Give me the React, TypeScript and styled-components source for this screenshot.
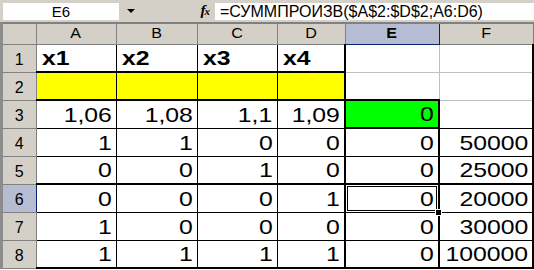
import React from "react";
import styled, { createGlobalStyle } from "styled-components";

const GlobalStyle = createGlobalStyle`
  html, body {
    margin: 0;
    padding: 0;
    background: #fff;
  }
  body {
    font-family: "Liberation Sans", Arial, sans-serif;
    overflow: hidden;
  }
`;

const GRID = "1px solid #c0c0c0";
const BLACK1 = "1px solid #000";
const BLACK2 = "2px solid #000";
const HDR = "1px solid #808080";
const SEL = "1px solid #0a246a";

const Window = styled.div`
  width: 534px;
  height: 270px;
  overflow: hidden;
  background: #fff;
`;

const FormulaBar = styled.div`
  display: flex;
  align-items: center;
  height: 22px;
  background: #d4d0c8;
`;

const NameBox = styled.div`
  width: 116px;
  height: 17px;
  margin-left: 3px;
  background: #fff;
  color: #000;
  font-size: 15px;
  line-height: 17px;
  text-align: center;
`;

const DropButton = styled.div`
  width: 24px;
  height: 17px;
  display: flex;
  align-items: center;
  justify-content: center;

  &::after {
    content: "";
    border-left: 4px solid transparent;
    border-right: 4px solid transparent;
    border-top: 4px solid #000;
  }
`;

const FxMark = styled.div`
  width: 72px;
  padding-right: 5px;
  box-sizing: border-box;
  text-align: right;
  font-family: "Liberation Serif", serif;
  font-style: italic;
  font-weight: bold;
  font-size: 15px;
  line-height: 17px;
  color: #000;
`;

const FxSub = styled.span`
  font-size: 11px;
  margin-left: -1px;
`;

const FormulaInput = styled.div`
  flex: 1;
  height: 17px;
  background: #fff;
  padding-left: 5px;
  color: #000;
  font-size: 16px;
  line-height: 17px;
  white-space: nowrap;
  overflow: hidden;
`;

const Sheet = styled.div`
  border-top: 2px solid #808080;
  border-left: 3px solid #8c8c8c;
  overflow: hidden;
`;

const Grid = styled.table`
  border-collapse: collapse;
  table-layout: fixed;
  width: 530px;
`;

const HeaderRow = styled.tr`
  height: 20px;
`;

const BodyRow = styled.tr`
  height: 28px;
`;

const Corner = styled.th`
  background: #d4d0c8;
  border-right: ${HDR};
  border-bottom: ${HDR};
  padding: 0;
`;

const ColHeader = styled.th<{ $active: boolean }>`
  background: ${(p) => (p.$active ? "#b6bdd2" : "#d4d0c8")};
  border-right: ${(p) => (p.$active ? SEL : HDR)};
  border-bottom: ${(p) => (p.$active ? SEL : HDR)};
  padding: 0;
  font-size: 14px;
  font-weight: ${(p) => (p.$active ? "bold" : "normal")};
  line-height: 19px;
  color: #000;
  text-align: center;
  vertical-align: middle;
`;

const HeaderText = styled.span`
  display: inline-block;
  transform: scaleX(1.15);
`;

const RowHeader = styled.th<{ $active: boolean }>`
  background: ${(p) => (p.$active ? "#b6bdd2" : "#d4d0c8")};
  border-top: ${(p) => (p.$active ? SEL : HDR)};
  border-bottom: ${HDR};
  border-right: ${(p) => (p.$active ? SEL : HDR)};
  padding: 0 0 3px;
  font-size: 16px;
  font-weight: normal;
  line-height: 18px;
  color: #000;
  text-align: center;
  vertical-align: bottom;
`;

const Cell = styled.td<{
  $top: string;
  $right: string;
  $bottom: string;
  $left: string;
  $fill: string;
  $bold: boolean;
  $align: "left" | "right";
  $active: boolean;
}>`
  position: relative;
  background: ${(p) => p.$fill};
  border-top: ${(p) => p.$top};
  border-right: ${(p) => p.$right};
  border-bottom: ${(p) => p.$bottom};
  border-left: ${(p) => p.$left};
  padding: 0 4px 3px 5px;
  font-size: 21px;
  font-weight: ${(p) => (p.$bold ? "bold" : "normal")};
  line-height: 21px;
  color: #000;
  text-align: ${(p) => p.$align};
  vertical-align: bottom;
  white-space: nowrap;
  box-shadow: ${(p) =>
    p.$active ? "inset 0 0 0 1px #fff, inset 0 0 0 2px #000" : "none"};
`;

const CellText = styled.span<{ $align: "left" | "right" }>`
  display: inline-block;
  transform: scaleX(1.18);
  transform-origin: ${(p) => p.$align} bottom;
`;

const FillHandle = styled.span`
  position: absolute;
  right: -4px;
  bottom: -4px;
  width: 5px;
  height: 5px;
  background: #000;
  border: 1px solid #fff;
  z-index: 2;
`;

const COLS = ["A", "B", "C", "D", "E", "F"];
const WIDTHS = [33, 80, 81, 80, 68, 94, 94];

const DATA = [
  ["x1", "x2", "x3", "x4", "", ""],
  ["", "", "", "", "", ""],
  ["1,06", "1,08", "1,1", "1,09", "0", ""],
  ["1", "1", "0", "0", "0", "50000"],
  ["0", "0", "1", "0", "0", "25000"],
  ["0", "0", "0", "1", "0", "20000"],
  ["1", "0", "0", "0", "0", "30000"],
  ["1", "1", "1", "1", "0", "100000"],
];

const ACTIVE_ROW = 6;
const ACTIVE_COL = 4;

// line above row r (1..9), in column c (0..5)
const hLine = (r: number, c: number) => {
  if (r === 1) return c === ACTIVE_COL ? SEL : HDR;
  if (r === 2) return c <= 3 ? BLACK2 : GRID;
  if (r === 3) return c <= 4 ? BLACK2 : GRID;
  if (r === 4) return c === 4 ? BLACK2 : BLACK1;
  if (r === 6 || r === 9) return BLACK2;
  return BLACK1;
};

// line left of column b (0..6), in row r (1..8)
const vLine = (r: number, b: number) => {
  if (b === 0) return r === ACTIVE_ROW ? SEL : HDR;
  if (b <= 3) return BLACK1;
  if (b === 4) return BLACK2;
  if (b === 5) return r <= 2 ? GRID : BLACK2;
  return BLACK2;
};

const fillOf = (r: number, c: number) => {
  if (r === 2 && c <= 3) return "#ffff00";
  if (r === 3 && c === 4) return "#00ff00";
  return "#fff";
};

export default function App() {
  return (
    <Window>
      <GlobalStyle />
      <FormulaBar>
        <NameBox>E6</NameBox>
        <DropButton />
        <FxMark>
          f<FxSub>x</FxSub>
        </FxMark>
        <FormulaInput>=СУММПРОИЗВ($A$2:$D$2;A6:D6)</FormulaInput>
      </FormulaBar>
      <Sheet>
        <Grid>
          <colgroup>
            {WIDTHS.map((w, i) => (
              <col key={i} style={{ width: w }} />
            ))}
          </colgroup>
          <tbody>
            <HeaderRow>
              <Corner />
              {COLS.map((name, c) => (
                <ColHeader key={name} $active={c === ACTIVE_COL}>
                  <HeaderText>{name}</HeaderText>
                </ColHeader>
              ))}
            </HeaderRow>
            {DATA.map((row, i) => {
              const r = i + 1;
              return (
                <BodyRow key={r}>
                  <RowHeader $active={r === ACTIVE_ROW}>{r}</RowHeader>
                  {row.map((value, c) => {
                    const align = r === 1 ? "left" : "right";
                    const active = r === ACTIVE_ROW && c === ACTIVE_COL;
                    return (
                      <Cell
                        key={c}
                        $top={hLine(r, c)}
                        $bottom={hLine(r + 1, c)}
                        $left={vLine(r, c)}
                        $right={vLine(r, c + 1)}
                        $fill={fillOf(r, c)}
                        $bold={r === 1}
                        $align={align}
                        $active={active}
                      >
                        {value && <CellText $align={align}>{value}</CellText>}
                        {active && <FillHandle />}
                      </Cell>
                    );
                  })}
                </BodyRow>
              );
            })}
          </tbody>
        </Grid>
      </Sheet>
    </Window>
  );
}
